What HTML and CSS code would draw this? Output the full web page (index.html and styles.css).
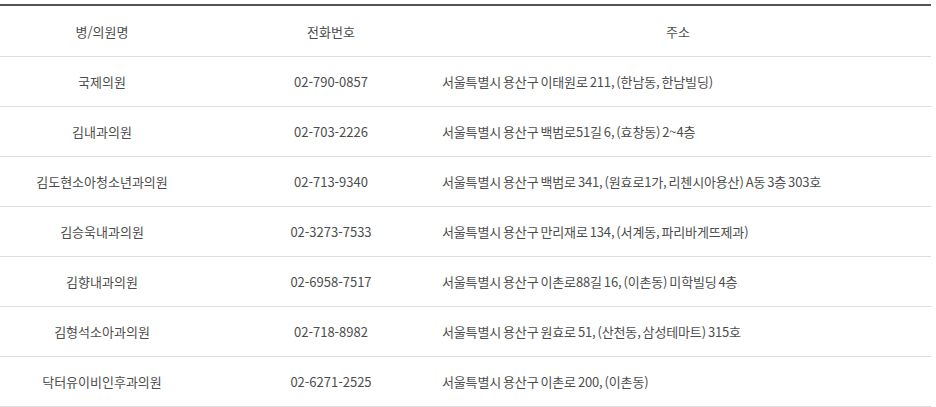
FILE: index.html
```html
<!DOCTYPE html>
<html lang="ko">
<head>
<meta charset="utf-8">
<link rel="stylesheet" href="styles.css">
</head>
<body>
<div class="wrap">
<table class="list">
<colgroup><col class="c1"><col class="c2"><col class="c3"></colgroup>
<thead>
<tr><th>병/의원명</th><th class="tel">전화번호</th><th class="addr-h">주소</th></tr>
</thead>
<tbody>
<tr><td>국제의원</td><td class="tel">02-790-0857</td><td class="addr">서울특별시 용산구 이태원로 211, (한남동, 한남빌딩)</td></tr>
<tr><td>김내과의원</td><td class="tel">02-703-2226</td><td class="addr">서울특별시 용산구 백범로51길 6, (효창동) 2~4층</td></tr>
<tr><td>김도현소아청소년과의원</td><td class="tel">02-713-9340</td><td class="addr">서울특별시 용산구 백범로 341, (원효로1가, 리첸시아용산) A동 3층 303호</td></tr>
<tr><td>김승욱내과의원</td><td class="tel">02-3273-7533</td><td class="addr">서울특별시 용산구 만리재로 134, (서계동, 파리바게뜨제과)</td></tr>
<tr><td>김향내과의원</td><td class="tel">02-6958-7517</td><td class="addr">서울특별시 용산구 이촌로88길 16, (이촌동) 미학빌딩 4층</td></tr>
<tr><td>김형석소아과의원</td><td class="tel">02-718-8982</td><td class="addr">서울특별시 용산구 원효로 51, (산천동, 삼성테마트) 315호</td></tr>
<tr><td>닥터유이비인후과의원</td><td class="tel">02-6271-2525</td><td class="addr">서울특별시 용산구 이촌로 200, (이촌동)</td></tr>
</tbody>
</table>
</div>
</body>
</html>
```
FILE: styles.css
```css
html, body {
  margin: 0;
  padding: 0;
  background: #fff;
}
.wrap {
  padding-top: 4px;
  width: 931px;
}
.list {
  width: 931px;
  border-collapse: collapse;
  table-layout: fixed;
  border-top: 2px solid #555;
  font-family: "Noto Sans CJK KR", "Noto Sans", sans-serif;
  font-size: 13px;
  color: #4d4d4d;
  letter-spacing: 0;
}
.c1 { width: 204px; }
.c2 { width: 221px; }
.c3 { width: 506px; }
.list th,
.list td {
  height: 49px;
  padding: 0;
  border-bottom: 1px solid #ddd;
  text-align: center;
  vertical-align: middle;
  font-weight: normal;
}
.list th {
  height: 50px;
}
.list .tel {
  padding-left: 33px;
}
.list .addr {
  text-align: left;
  padding-left: 17px;
  letter-spacing: -0.15px;
  word-spacing: -1.5px;
}
```
